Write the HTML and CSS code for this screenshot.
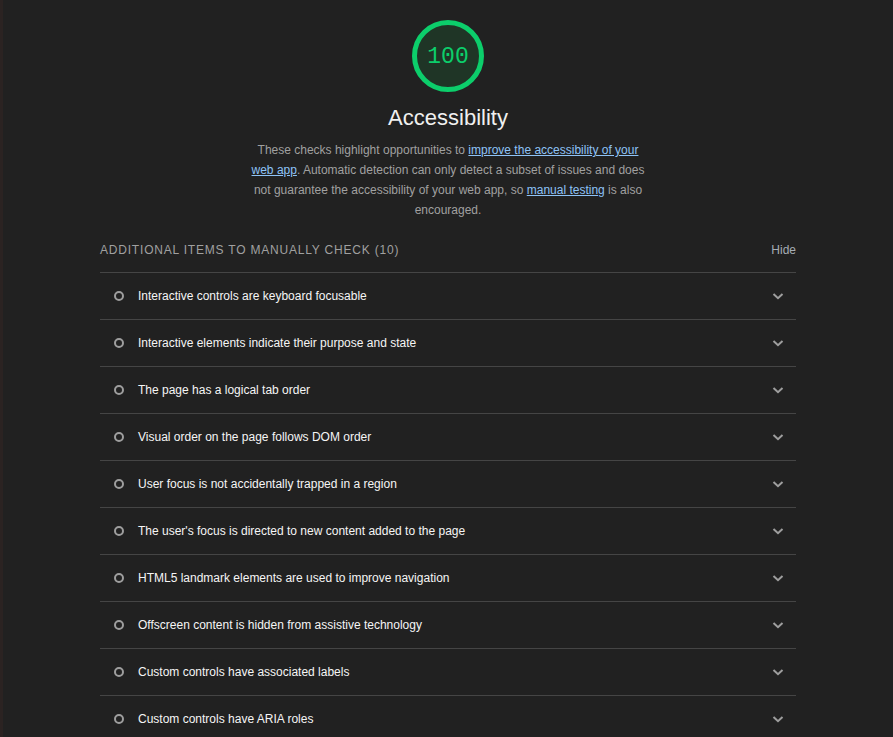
FILE: index.html
```html
<!DOCTYPE html>
<html lang="en">
<head>
<meta charset="utf-8">
<title>Accessibility</title>
<link rel="stylesheet" href="styles.css">
</head>
<body>
<div class="page">
  <div class="category">
    <div class="gauge">
      <svg class="gauge__svg" width="72" height="72" viewBox="0 0 72 72" aria-hidden="true">
        <circle cx="36" cy="36" r="33.5" fill="#1f3526" stroke="#0cce6b" stroke-width="5"/>
      </svg>
      <span class="gauge__value">100</span>
    </div>
    <h1 class="category__title">Accessibility</h1>
    <p class="category__desc">These checks highlight opportunities to <a href="#">improve the accessibility of your web app</a>. Automatic detection can only detect a subset of issues and does not guarantee the accessibility of your web app, so <a href="#">manual testing</a> is also encouraged.</p>

    <div class="group">
      <div class="group__header">
        <span class="group__title">Additional items to manually check (10)</span>
        <span class="group__toggle">Hide</span>
      </div>
      <ul class="audits">
        <li class="audit"><span class="audit__icon"></span><span class="audit__title">Interactive controls are keyboard focusable</span><svg class="audit__chevron" width="12" height="12" viewBox="0 0 12 12"><path d="M1.5 4 L6 8.2 L10.5 4" fill="none" stroke="#9e9e9e" stroke-width="2"/></svg></li>
        <li class="audit"><span class="audit__icon"></span><span class="audit__title">Interactive elements indicate their purpose and state</span><svg class="audit__chevron" width="12" height="12" viewBox="0 0 12 12"><path d="M1.5 4 L6 8.2 L10.5 4" fill="none" stroke="#9e9e9e" stroke-width="2"/></svg></li>
        <li class="audit"><span class="audit__icon"></span><span class="audit__title">The page has a logical tab order</span><svg class="audit__chevron" width="12" height="12" viewBox="0 0 12 12"><path d="M1.5 4 L6 8.2 L10.5 4" fill="none" stroke="#9e9e9e" stroke-width="2"/></svg></li>
        <li class="audit"><span class="audit__icon"></span><span class="audit__title">Visual order on the page follows DOM order</span><svg class="audit__chevron" width="12" height="12" viewBox="0 0 12 12"><path d="M1.5 4 L6 8.2 L10.5 4" fill="none" stroke="#9e9e9e" stroke-width="2"/></svg></li>
        <li class="audit"><span class="audit__icon"></span><span class="audit__title">User focus is not accidentally trapped in a region</span><svg class="audit__chevron" width="12" height="12" viewBox="0 0 12 12"><path d="M1.5 4 L6 8.2 L10.5 4" fill="none" stroke="#9e9e9e" stroke-width="2"/></svg></li>
        <li class="audit"><span class="audit__icon"></span><span class="audit__title">The user's focus is directed to new content added to the page</span><svg class="audit__chevron" width="12" height="12" viewBox="0 0 12 12"><path d="M1.5 4 L6 8.2 L10.5 4" fill="none" stroke="#9e9e9e" stroke-width="2"/></svg></li>
        <li class="audit"><span class="audit__icon"></span><span class="audit__title">HTML5 landmark elements are used to improve navigation</span><svg class="audit__chevron" width="12" height="12" viewBox="0 0 12 12"><path d="M1.5 4 L6 8.2 L10.5 4" fill="none" stroke="#9e9e9e" stroke-width="2"/></svg></li>
        <li class="audit"><span class="audit__icon"></span><span class="audit__title">Offscreen content is hidden from assistive technology</span><svg class="audit__chevron" width="12" height="12" viewBox="0 0 12 12"><path d="M1.5 4 L6 8.2 L10.5 4" fill="none" stroke="#9e9e9e" stroke-width="2"/></svg></li>
        <li class="audit"><span class="audit__icon"></span><span class="audit__title">Custom controls have associated labels</span><svg class="audit__chevron" width="12" height="12" viewBox="0 0 12 12"><path d="M1.5 4 L6 8.2 L10.5 4" fill="none" stroke="#9e9e9e" stroke-width="2"/></svg></li>
        <li class="audit"><span class="audit__icon"></span><span class="audit__title">Custom controls have ARIA roles</span><svg class="audit__chevron" width="12" height="12" viewBox="0 0 12 12"><path d="M1.5 4 L6 8.2 L10.5 4" fill="none" stroke="#9e9e9e" stroke-width="2"/></svg></li>
      </ul>
    </div>
  </div>
</div>
</body>
</html>
```

FILE: styles.css
```css
html, body {
  margin: 0;
  padding: 0;
  background: #212121;
  height: 100%;
  overflow: hidden;
}

body {
  font-family: "Liberation Sans", Arial, sans-serif;
  font-size: 12px;
  color: #f5f5f5;
}

.page {
  min-height: 100%;
  border-left: 3px solid #5a3832;
  border-image: linear-gradient(to right, #2b2322 0, #2b2322 33%, #5e3a34 33%, #5e3a34 100%) 1;
  box-sizing: border-box;
}

.category {
  width: 696px;
  margin: 0 auto;
  display: flex;
  flex-direction: column;
  align-items: center;
  padding-top: 20px;
}

.gauge {
  position: relative;
  width: 72px;
  height: 72px;
}

.gauge__svg {
  display: block;
}

.gauge__value {
  position: absolute;
  inset: 0;
  display: flex;
  align-items: center;
  justify-content: center;
  font-family: "Liberation Mono", "DejaVu Sans Mono", monospace;
  font-size: 23px;
  color: #0cce6b;
  padding-top: 1px;
}

.category__title {
  margin: 12px 0 0;
  font-size: 22px;
  line-height: 28px;
  font-weight: normal;
  color: #f0f0f0;
}

.category__desc {
  margin: 8px 0 0;
  max-width: 400px;
  text-align: center;
  line-height: 20px;
  color: #a0a0a0;
}

.category__desc a {
  color: #8ec3f7;
  text-decoration: underline;
}

.group {
  align-self: stretch;
  margin-top: 20px;
}

.group__header {
  display: flex;
  justify-content: space-between;
  align-items: center;
  height: 20px;
  margin-bottom: 12px;
}

.group__title {
  text-transform: uppercase;
  letter-spacing: 0.8px;
  color: #a0a0a0;
}

.group__toggle {
  color: #a6adb4;
}

.audits {
  list-style: none;
  margin: 0;
  padding: 0;
}

.audit {
  display: flex;
  align-items: center;
  height: 46px;
  border-top: 1px solid #454545;
  padding: 0 12px 0 14px;
}

.audit__icon {
  width: 10px;
  height: 10px;
  box-sizing: border-box;
  border: 2px solid #9e9e9e;
  border-radius: 50%;
  margin-right: 14px;
  flex: none;
}

.audit__title {
  flex: 1;
  color: #f5f5f5;
}

.audit__chevron {
  flex: none;
  display: block;
}
```
